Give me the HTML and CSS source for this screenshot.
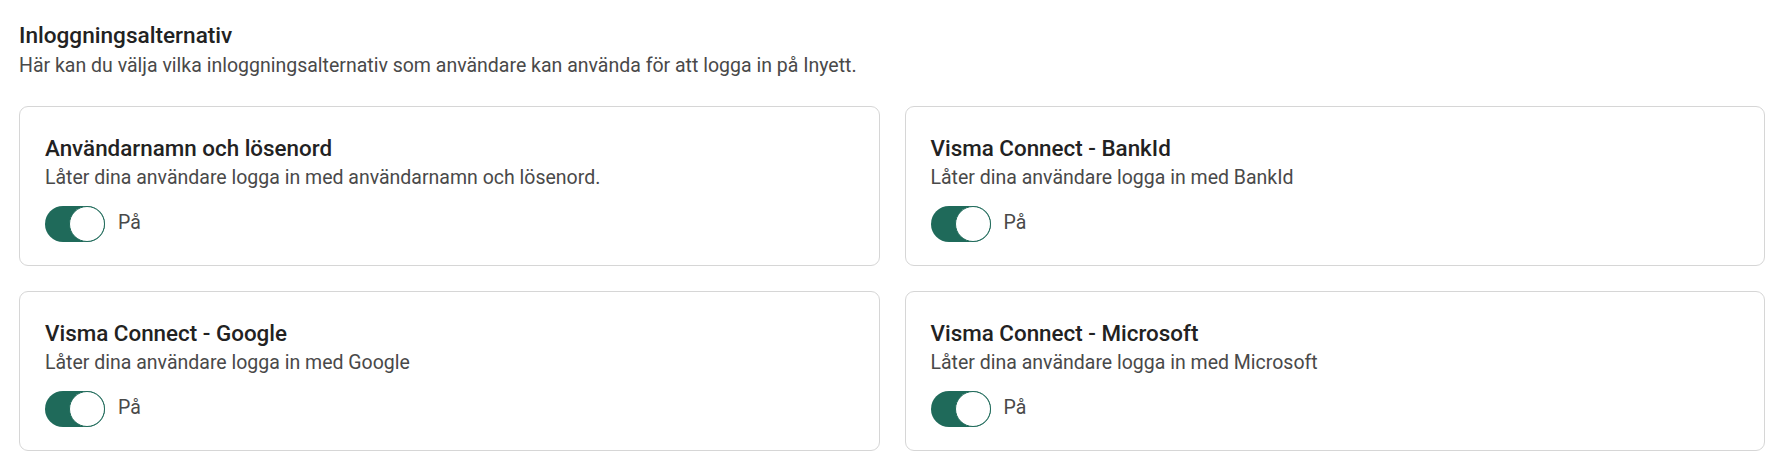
FILE: index.html
```html
<!DOCTYPE html>
<html lang="sv">
<head>
<meta charset="utf-8">
<title>Inloggningsalternativ</title>
<link rel="stylesheet" href="styles.css">
</head>
<body>
<main class="page">
  <h1 class="heading">Inloggningsalternativ</h1>
  <p class="intro">Här kan du välja vilka inloggningsalternativ som användare kan använda för att logga in på Inyett.</p>
  <div class="grid">
    <section class="card">
      <h2 class="card-title">Användarnamn och lösenord</h2>
      <p class="card-desc">Låter dina användare logga in med användarnamn och lösenord.</p>
      <label class="toggle-row"><span class="toggle"><span class="knob"></span></span><span class="toggle-label">På</span></label>
    </section>
    <section class="card">
      <h2 class="card-title">Visma Connect - BankId</h2>
      <p class="card-desc">Låter dina användare logga in med BankId</p>
      <label class="toggle-row"><span class="toggle"><span class="knob"></span></span><span class="toggle-label">På</span></label>
    </section>
    <section class="card">
      <h2 class="card-title">Visma Connect - Google</h2>
      <p class="card-desc">Låter dina användare logga in med Google</p>
      <label class="toggle-row"><span class="toggle"><span class="knob"></span></span><span class="toggle-label">På</span></label>
    </section>
    <section class="card">
      <h2 class="card-title">Visma Connect - Microsoft</h2>
      <p class="card-desc">Låter dina användare logga in med Microsoft</p>
      <label class="toggle-row"><span class="toggle"><span class="knob"></span></span><span class="toggle-label">På</span></label>
    </section>
  </div>
</main>
</body>
</html>
```
FILE: styles.css
```css
* { box-sizing: border-box; }
html, body { margin: 0; padding: 0; background: #ffffff; }
body {
  font-family: Roboto, "Liberation Sans", Arial, sans-serif;
  color: #252525;
}
.page {
  padding: 21.5px 15px 0 19px;
}
.heading {
  margin: 0;
  font-size: 22.6px;
  line-height: 28.8px;
  font-weight: 500;
  color: #222222;
}
.intro {
  margin: 2px 0 0;
  font-size: 19.5px;
  line-height: 28.8px;
  color: #494949;
}
.grid {
  margin-top: 25px;
  display: grid;
  grid-template-columns: 1fr 1fr;
  gap: 25px 25px;
}
.card {
  border: 1px solid #d6d6d6;
  border-radius: 9px;
  padding: 27px 25px 23px;
  height: 160px;
}
.card-title {
  margin: 0;
  font-size: 22.4px;
  line-height: 28.8px;
  font-weight: 500;
  color: #222222;
}
.card-desc {
  margin: 1px 0 0;
  font-size: 19.5px;
  line-height: 28.8px;
  color: #494949;
}
.toggle-row {
  margin-top: 13px;
  display: flex;
  align-items: center;
  gap: 13px;
}
.toggle {
  width: 60px;
  height: 36px;
  border-radius: 18px;
  background: #1f6a5a;
  display: flex;
  justify-content: flex-end;
}
.knob {
  width: 36px;
  height: 36px;
  border-radius: 50%;
  background: #ffffff;
  border: 1.5px solid #1f6a5a;
}
.toggle-label {
  font-size: 19.5px;
  line-height: 28.8px;
  color: #494949;
}
```
